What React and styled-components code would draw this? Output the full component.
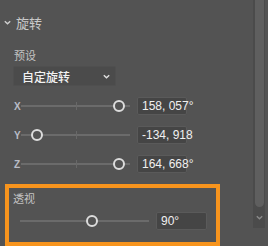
import React from "react";
import styled, { createGlobalStyle } from "styled-components";

const GlobalStyle = createGlobalStyle`
  html, body {
    margin: 0;
    padding: 0;
    background: #535353;
  }
  body {
    font-family: "Noto Sans CJK SC", "Liberation Sans", sans-serif;
  }
`;

const Page = styled.div`
  width: 268px;
  height: 246px;
  display: flex;
  background: #535353;
  overflow: hidden;
`;

const Content = styled.div`
  flex: 1;
  display: flex;
  flex-direction: column;
`;

const Header = styled.div`
  display: flex;
  align-items: center;
  gap: 5px;
  height: 14px;
  margin: 15px 0 0 4px;
  color: #c9c9c9;
  font-size: 13px;
`;

const Label = styled.div`
  color: #c4c4c4;
  font-size: 11px;
  line-height: 12px;
  margin: ${(p) => p.$margin || "0"};
`;

const Select = styled.div`
  width: 88px;
  height: 19px;
  margin: 5px 0 0 13px;
  display: flex;
  align-items: center;
  justify-content: space-between;
  padding: 0 5px 0 8px;
  background: #4b4b4b;
  border: 1px solid #4f4f4f;
  border-radius: 2px;
  color: #f2f2f2;
  font-size: 12px;
  font-weight: 500;
`;

const Rows = styled.div`
  display: flex;
  flex-direction: column;
  gap: 11px;
  margin: 11px 0 0 14px;
`;

const Row = styled.div`
  display: flex;
  align-items: center;
  height: 18px;
  margin-top: ${(p) => p.$top || 0}px;
  padding-left: ${(p) => p.$indent || 0}px;
`;

const Axis = styled.span`
  width: 7px;
  font-family: "Liberation Sans", sans-serif;
  font-size: 10px;
  font-weight: bold;
  color: #b9bcc6;
`;

const Track = styled.div`
  position: relative;
  width: ${(p) => p.$width}px;
  height: 2px;
  background: #6b6b6b;
`;

const Tick = styled.div`
  position: absolute;
  left: 50%;
  top: -3px;
  width: 1px;
  height: 8px;
  background: #686868;
`;

const Thumb = styled.div`
  position: absolute;
  top: 50%;
  width: 8px;
  height: 8px;
  border: 2px solid #dcdcdc;
  border-radius: 50%;
  background: #535353;
  transform: translate(-50%, -50%);
`;

const Field = styled.div`
  width: ${(p) => p.$width || 50}px;
  height: 18px;
  box-sizing: border-box;
  margin-left: 7px;
  padding-left: 4px;
  display: flex;
  align-items: center;
  background: #454545;
  border: 1px solid #5a5a5a;
  border-radius: 2px;
  color: #f0f0f0;
  font-family: "Liberation Sans", sans-serif;
  font-size: 12px;
  white-space: nowrap;
`;

const Highlight = styled.div`
  width: 207px;
  height: 55px;
  margin: 11px 0 0 5px;
  border: 4px solid #f7941d;
  display: flex;
  flex-direction: column;
`;

const Scrollbar = styled.div`
  width: 12px;
  height: 228px;
  margin-right: 3px;
  background: #4b4b4b;
  display: flex;
  flex-direction: column;
  align-items: center;
`;

const ScrollThumb = styled.div`
  width: 9px;
  height: 207px;
  background: #5f5f5f;
  border-radius: 0 0 5px 5px;
`;

const ScrollArrow = styled.div`
  margin-top: 8px;
  display: flex;
`;

const Chevron = ({ color = "#cfcfcf", size = 7 }) => (
  <svg width={size} height={size - 2} viewBox="0 0 7 5">
    <path d="M0.8 1.2 L3.5 3.8 L6.2 1.2" fill="none" stroke={color} strokeWidth="1.4" />
  </svg>
);

const Slider = ({ width, value, tick }) => (
  <Track $width={width}>
    {tick && <Tick />}
    <Thumb style={{ left: `${value * 100}%` }} />
  </Track>
);

const axes = [
  { name: "X", value: 0.9, text: "158, 057°" },
  { name: "Y", value: 0.147, text: "-134, 918" },
  { name: "Z", value: 0.9, text: "164, 668°" },
];

export default function App() {
  return (
    <>
      <GlobalStyle />
      <Page>
        <Content>
          <Header>
            <Chevron />
            <span>旋转</span>
          </Header>
          <Label $margin="20px 0 0 14px">预设</Label>
          <Select>
            <span>自定旋转</span>
            <Chevron color="#e0e0e0" />
          </Select>
          <Rows>
            {axes.map((a) => (
              <Row key={a.name}>
                <Axis>{a.name}</Axis>
                <Slider width={109} value={a.value} tick />
                <Field>{a.text}</Field>
              </Row>
            ))}
          </Rows>
          <Highlight>
            <Label $margin="4px 0 0 4px">透视</Label>
            <Row $top={8} $indent={11}>
              <Slider width={129} value={0.56} />
              <Field $width={51}>90°</Field>
            </Row>
          </Highlight>
        </Content>
        <Scrollbar>
          <ScrollThumb />
          <ScrollArrow>
            <Chevron color="#8a8a8a" />
          </ScrollArrow>
        </Scrollbar>
      </Page>
    </>
  );
}
